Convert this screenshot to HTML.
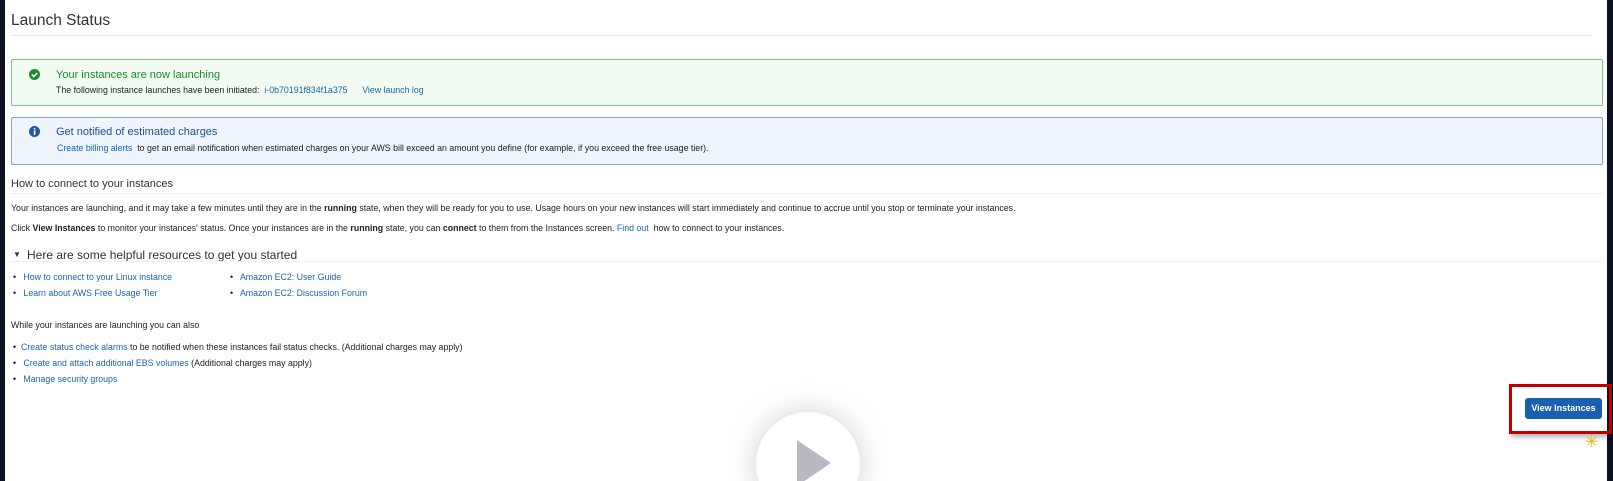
<!DOCTYPE html>
<html><head><style>
html,body{margin:0;width:1613px;height:481px;overflow:hidden}
body{background:#fff;font-family:"Liberation Sans",sans-serif;color:#222}
#w{position:relative;width:1613px;height:481px;overflow:hidden}
.a{position:absolute;white-space:nowrap}
.l{color:#1a64b0}
.s{font-size:8.8px}
</style></head><body><div id="w">
<div class="a" style="left:0;top:0;width:5px;height:481px;background:#0d1020"></div>
<div class="a" style="left:1607px;top:0;width:6px;height:481px;background:#0d1020"></div>
<div class="a" style="left:11px;top:12px;font-size:15.5px;color:#333">Launch Status</div>
<div class="a" style="left:11px;top:35px;width:1581px;height:1px;background:#e8e8e8"></div>

<div class="a" style="left:11px;top:59px;width:1592px;height:47px;border:1px solid #7cc97c;background:#f1fbf1;border-radius:2px;box-sizing:border-box"></div>
<svg class="a" style="left:29px;top:69px" width="11" height="11"><circle cx="5.5" cy="5.5" r="5.5" fill="#1e8a2e"/><path d="M2.8 5.6l2 2 3.4-3.6" stroke="#fff" stroke-width="1.6" fill="none"/></svg>
<div class="a" style="left:56px;top:69px;font-size:11px;color:#1d8a2a">Your instances are now launching</div>
<div class="a s" style="left:56px;top:85px">The following instance launches have been initiated: &nbsp;<span class="l">i-0b70191f834f1a375</span> &nbsp; &nbsp; &nbsp;<span class="l">View launch log</span></div>

<div class="a" style="left:11px;top:117px;width:1592px;height:48px;border:1px solid #7fa5d8;background:#eef5fd;border-radius:2px;box-sizing:border-box"></div>
<svg class="a" style="left:29px;top:126px" width="11" height="11"><circle cx="5.5" cy="5.5" r="5.5" fill="#1f5aa8"/><rect x="4.8" y="4.5" width="1.6" height="4.5" fill="#fff"/><circle cx="5.6" cy="2.9" r="0.9" fill="#fff"/></svg>
<div class="a" style="left:56px;top:126px;font-size:11px;color:#1f4f96">Get notified of estimated charges</div>
<div class="a s" style="left:57px;top:143px"><span class="l">Create billing alerts</span> &nbsp;to get an email notification when estimated charges on your AWS bill exceed an amount you define (for example, if you exceed the free usage tier).</div>

<div class="a" style="left:11px;top:178px;font-size:11px;color:#333">How to connect to your instances</div>
<div class="a" style="left:11px;top:193px;width:1592px;height:1px;background:#eee"></div>
<div class="a s" style="left:11px;top:203px">Your instances are launching, and it may take a few minutes until they are in the <b>running</b> state, when they will be ready for you to use. Usage hours on your new instances will start immediately and continue to accrue until you stop or terminate your instances.</div>
<div class="a s" style="left:11px;top:223px">Click <b>View Instances</b> to monitor your instances' status. Once your instances are in the <b>running</b> state, you can <b>connect</b> to them from the Instances screen. <span class="l">Find out</span> &nbsp;how to connect to your instances.</div>

<div class="a" style="left:13px;top:250px;font-size:8px;color:#333">▼</div>
<div class="a" style="left:27px;top:248px;font-size:12px;color:#333">Here are some helpful resources to get you started</div>
<div class="a" style="left:11px;top:261px;width:1592px;height:1px;background:#f0f0f0"></div>
<div class="a s" style="left:13px;top:272px">•&nbsp;&nbsp; <span class="l">How to connect to your Linux instance</span></div>
<div class="a s" style="left:13px;top:288px">•&nbsp;&nbsp; <span class="l">Learn about AWS Free Usage Tier</span></div>
<div class="a s" style="left:230px;top:272px">•&nbsp;&nbsp; <span class="l">Amazon EC2: User Guide</span></div>
<div class="a s" style="left:230px;top:288px">•&nbsp;&nbsp; <span class="l">Amazon EC2: Discussion Forum</span></div>

<div class="a s" style="left:11px;top:320px">While your instances are launching you can also</div>
<div class="a s" style="left:13px;top:342px">•&nbsp; <span class="l">Create status check alarms</span> to be notified when these instances fail status checks. (Additional charges may apply)</div>
<div class="a s" style="left:13px;top:358px">•&nbsp;&nbsp; <span class="l">Create and attach additional EBS volumes</span> (Additional charges may apply)</div>
<div class="a s" style="left:13px;top:374px">•&nbsp;&nbsp; <span class="l">Manage security groups</span></div>

<div class="a" style="left:1509px;top:384px;width:103px;height:50px;border:3px solid #c00000;box-sizing:border-box;box-shadow:2px 3px 5px rgba(0,0,0,.3)"></div>
<div class="a" style="left:1525px;top:398px;width:77px;height:21px;background:#1a5fb0;border-radius:3px;color:#fff;font-size:9px;font-weight:bold;line-height:21px;text-align:center">View Instances</div>
<div class="a" style="left:1585px;top:432px;font-size:16px;color:#e8b400">✳</div>

<div class="a" style="left:700px;top:380px;width:220px;height:101px;overflow:hidden">
<div style="position:absolute;left:56px;top:32px;width:104px;height:104px;border-radius:50%;background:#fff;box-shadow:0 0 30px rgba(120,120,140,.35)"></div>
<svg style="position:absolute;left:97px;top:60px" width="36" height="41"><path d="M0 0L34 23L0 46Z" fill="#b8b9c2"/></svg>
</div>
</div></body></html>
